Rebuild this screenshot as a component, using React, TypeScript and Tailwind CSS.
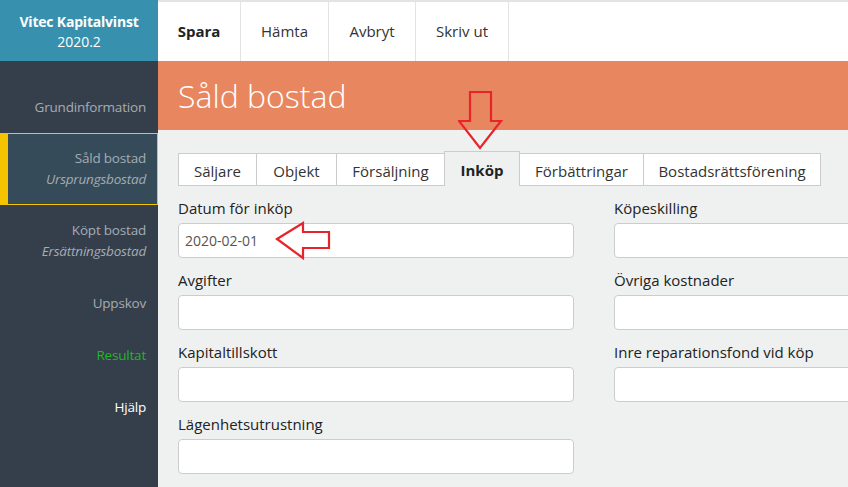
import React from "react";

const font = { fontFamily: '"Open Sans", "Noto Sans", sans-serif' };

function Field({ label, value }: { label: string; value?: string }) {
  return (
    <div className="flex flex-col">
      <div className="h-[37px] pt-[12px] text-[15px] leading-[20px] text-[#222]">{label}</div>
      <div className="h-[35px] rounded-[4px] border border-[#cccccc] bg-white px-[6px] flex items-center text-[14px] text-[#555]">
        {value}
      </div>
    </div>
  );
}

export default function App() {
  const tabs: [string, string][] = [
    ["Säljare", "w-[79px]"],
    ["Objekt", "w-[81px]"],
    ["Försäljning", "w-[109px]"],
    ["Inköp", "w-[76px]"],
    ["Förbättringar", "w-[125px]"],
    ["Bostadsrättsförening", "w-[178px]"],
  ];
  return (
    <div className="w-[848px] h-[487px] overflow-hidden flex bg-[#eff0f0]" style={font}>
      <div className="w-[158px] shrink-0 flex flex-col bg-[#353f4b]">
        <div className="h-[61px] bg-[#3790ad] flex flex-col items-center justify-center pt-[2px] text-white">
          <div className="text-[14px] font-bold leading-[20px] tracking-[-0.2px]">Vitec Kapitalvinst</div>
          <div className="text-[14px] leading-[20px]">2020.2</div>
        </div>
        <div className="pt-[20px] flex flex-col text-[13.5px] tracking-[-0.2px]">
          <div className="h-[52px] flex items-center justify-end pr-[12px] text-[#a5acb2]">Grundinformation</div>
          <div className="h-[72px] flex flex-col items-end justify-center pr-[11px] bg-[#364b59] border border-[#f5c400] border-l-[8px] leading-[21px] text-[#a5acb2]">
            <div>Såld bostad</div>
            <div className="italic">Ursprungsbostad</div>
          </div>
          <div className="h-[72px] flex flex-col items-end justify-center pr-[12px] leading-[21px] text-[#a5acb2]">
            <div>Köpt bostad</div>
            <div className="italic">Ersättningsbostad</div>
          </div>
          <div className="h-[52px] flex items-center justify-end pr-[12px] text-[#a5acb2]">Uppskov</div>
          <div className="h-[52px] flex items-center justify-end pr-[12px] text-[#22b526]">Resultat</div>
          <div className="h-[52px] flex items-center justify-end pr-[12px] text-white">Hjälp</div>
        </div>
      </div>
      <div className="flex-1 flex flex-col relative">
        <div className="h-[61px] bg-white border-t-2 border-[#e3e3e3] flex text-[15px] text-[#333]">
          <div className="w-[83px] flex items-center justify-center border-r border-[#e3e3e3] font-bold text-[#222]">Spara</div>
          <div className="w-[88px] flex items-center justify-center border-r border-[#e3e3e3]">Hämta</div>
          <div className="w-[87px] flex items-center justify-center border-r border-[#e3e3e3]">Avbryt</div>
          <div className="w-[93px] flex items-center justify-center border-r border-[#e3e3e3]">Skriv ut</div>
        </div>
        <div className="h-[69px] bg-[#e8875f] flex items-center pl-[20px] text-white text-[32px] font-light leading-none">
          Såld bostad
        </div>
        <div className="pl-[20px] pt-[21px]">
          <div className="flex items-end h-[35px]">
            {tabs.map(([t, w], i) =>
              t === "Inköp" ? (
                <div key={t} className={`${w} -ml-px h-[35px] pt-[3px] flex items-center justify-center border border-b-0 border-[#cccccc] bg-[#eff0f0] font-bold text-[15px] text-[#222]`}>
                  {t}
                </div>
              ) : (
                <div key={t} className={`${w} ${i === 0 ? "" : "-ml-px"} h-[33px] pt-[3px] flex items-center justify-center border border-[#cccccc] bg-white text-[15px] text-[#333]`}>
                  {t}
                </div>
              )
            )}
          </div>
          <div className="grid grid-cols-[396px_396px] gap-x-[40px] w-[900px]">
            <Field label="Datum för inköp" value="2020-02-01" />
            <Field label="Köpeskilling" />
            <Field label="Avgifter" />
            <Field label="Övriga kostnader" />
            <Field label="Kapitaltillskott" />
            <Field label="Inre reparationsfond vid köp" />
            <Field label="Lägenhetsutrustning" />
          </div>
        </div>
        <svg className="absolute left-[300px] top-[90px]" width="46" height="60" viewBox="0 0 46 60">
          <path d="M12 2 H33 V31 H43 L22 58 L1 31 H12 Z" fill="none" stroke="#e8242b" strokeWidth="2.2" strokeLinejoin="miter" />
        </svg>
        <svg className="absolute left-[117px] top-[221px]" width="56" height="40" viewBox="0 0 56 40">
          <path d="M2 18 L28 2 V11 H54 V27 H28 V37 Z" fill="none" stroke="#e8242b" strokeWidth="2.2" strokeLinejoin="miter" />
        </svg>
      </div>
    </div>
  );
}
